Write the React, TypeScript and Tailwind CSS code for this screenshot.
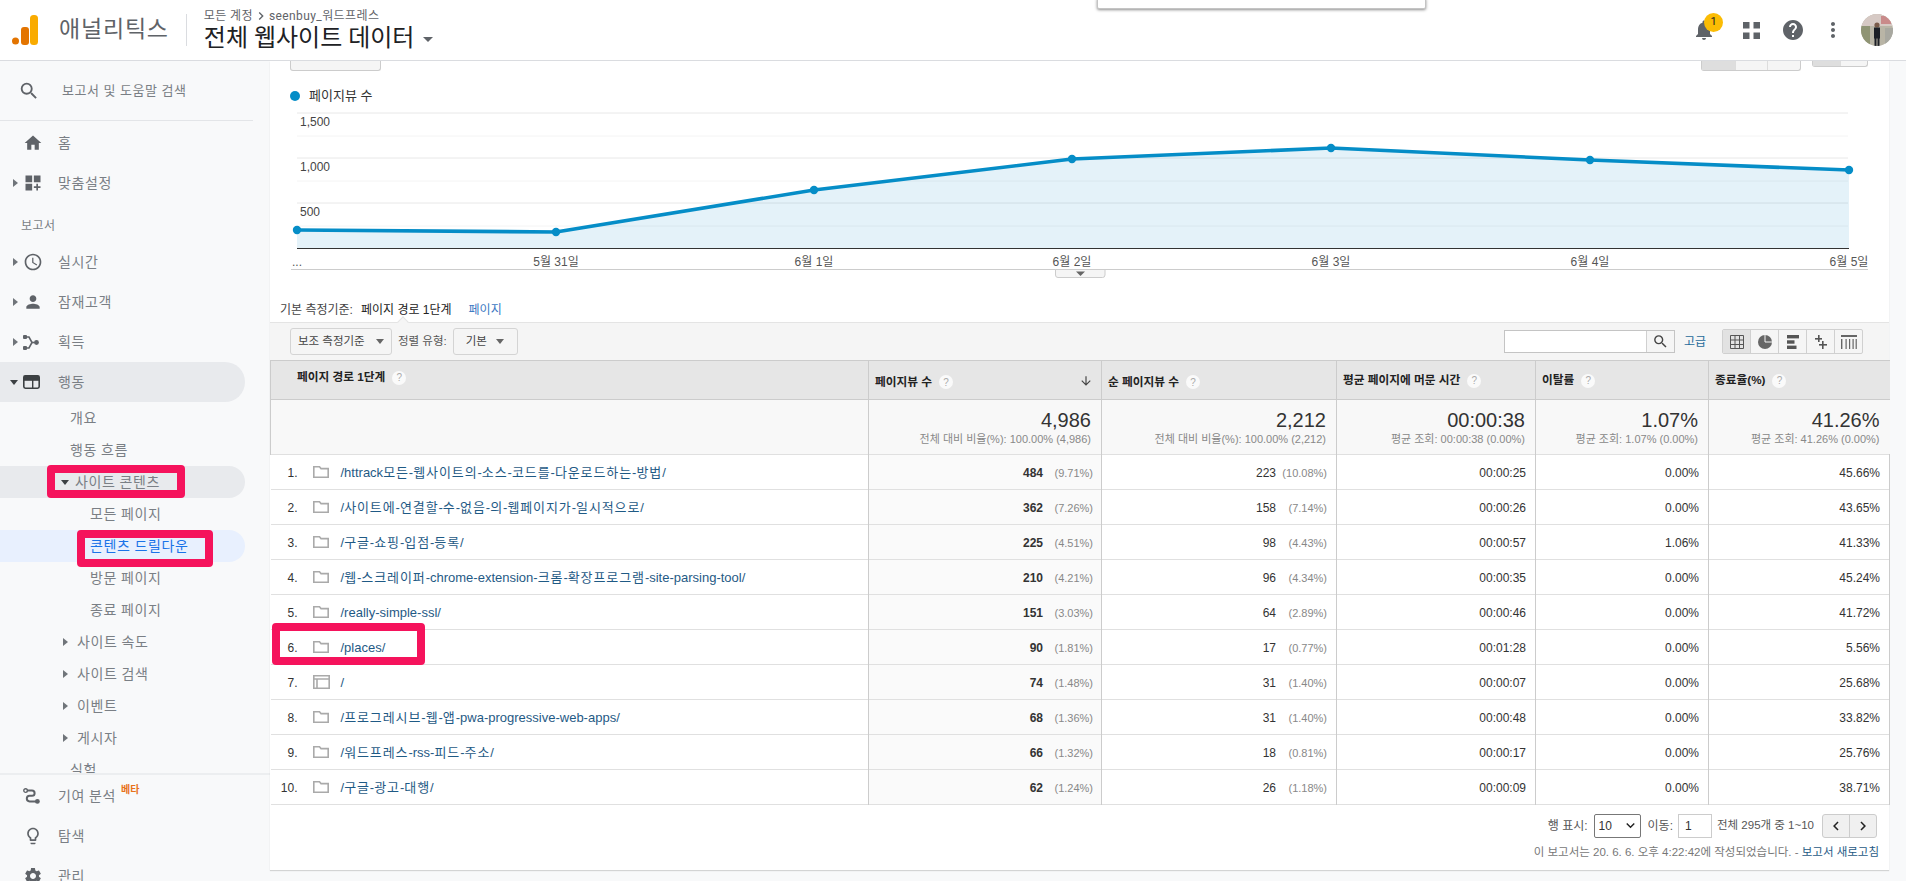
import type { ReactNode } from 'react';
import {
  MdAccessTime,
  MdArrowDownward,
  MdChevronLeft,
  MdChevronRight,
  MdDashboardCustomize,
  MdHelp,
  MdHome,
  MdKeyboardArrowDown,
  MdLightbulbOutline,
  MdMoreVert,
  MdNotifications,
  MdPerson,
  MdSearch,
  MdSettings,
} from 'react-icons/md';

interface Row {
  path: string;
  views: string;
  viewsPct: string;
  unique: string;
  uniquePct: string;
  time: string;
  bounce: string;
  exit: string;
  page?: boolean;
}

const rows: Row[] = [
  { path: '/httrack모든-웹사이트의-소스-코드를-다운로드하는-방법/', views: '484', viewsPct: '(9.71%)', unique: '223', uniquePct: '(10.08%)', time: '00:00:25', bounce: '0.00%', exit: '45.66%' },
  { path: '/사이트에-연결할-수-없음-의-웹페이지가-일시적으로/', views: '362', viewsPct: '(7.26%)', unique: '158', uniquePct: '(7.14%)', time: '00:00:26', bounce: '0.00%', exit: '43.65%' },
  { path: '/구글-쇼핑-입점-등록/', views: '225', viewsPct: '(4.51%)', unique: '98', uniquePct: '(4.43%)', time: '00:00:57', bounce: '1.06%', exit: '41.33%' },
  { path: '/웹-스크레이퍼-chrome-extension-크롬-확장프로그램-site-parsing-tool/', views: '210', viewsPct: '(4.21%)', unique: '96', uniquePct: '(4.34%)', time: '00:00:35', bounce: '0.00%', exit: '45.24%' },
  { path: '/really-simple-ssl/', views: '151', viewsPct: '(3.03%)', unique: '64', uniquePct: '(2.89%)', time: '00:00:46', bounce: '0.00%', exit: '41.72%' },
  { path: '/places/', views: '90', viewsPct: '(1.81%)', unique: '17', uniquePct: '(0.77%)', time: '00:01:28', bounce: '0.00%', exit: '5.56%' },
  { path: '/', views: '74', viewsPct: '(1.48%)', unique: '31', uniquePct: '(1.40%)', time: '00:00:07', bounce: '0.00%', exit: '25.68%', page: true },
  { path: '/프로그레시브-웹-앱-pwa-progressive-web-apps/', views: '68', viewsPct: '(1.36%)', unique: '31', uniquePct: '(1.40%)', time: '00:00:48', bounce: '0.00%', exit: '33.82%' },
  { path: '/워드프레스-rss-피드-주소/', views: '66', viewsPct: '(1.32%)', unique: '18', uniquePct: '(0.81%)', time: '00:00:17', bounce: '0.00%', exit: '25.76%' },
  { path: '/구글-광고-대행/', views: '62', viewsPct: '(1.24%)', unique: '26', uniquePct: '(1.18%)', time: '00:00:09', bounce: '0.00%', exit: '38.71%' },
];

// chart coordinates are relative to the svg, which starts at page (270, 105)
const points = [
  { x: 27, y: 125 },
  { x: 286, y: 127, label: '5월 31일' },
  { x: 544, y: 85, label: '6월 1일' },
  { x: 802, y: 54, label: '6월 2일' },
  { x: 1061, y: 43, label: '6월 3일' },
  { x: 1320, y: 55, label: '6월 4일' },
  { x: 1579, y: 65, label: '6월 5일' },
];

const linePath = points.map((p, i) => `${i === 0 ? 'M' : 'L'} ${p.x} ${p.y}`).join(' ');
const areaPath = `${linePath} L 1579 143 L 27 143 Z`;

// hangul runs a bit wider in the reference than Noto's, latin does not
function PathText({ text }: { text: string }) {
  const parts = text.split(/([가-힣]+)/);
  return (
    <>
      {parts.map((part, i) => (
        <span key={i} className={i % 2 === 1 ? 'tracking-[0.9px]' : ''}>
          {part}
        </span>
      ))}
    </>
  );
}

function Caret({ open }: { open?: boolean }) {
  return open ? (
    <span className="h-0 w-0 border-x-[4px] border-t-[5px] border-x-transparent border-t-[#3c4043]" />
  ) : (
    <span className="h-0 w-0 border-y-[4px] border-l-[5px] border-y-transparent border-l-[#70757a]" />
  );
}

function TopItem({ icon, label, caret, active }: { icon: ReactNode; label: string; caret?: 'open' | 'closed'; active?: boolean }) {
  return (
    <div className={`flex h-[40px] w-[245px] items-center rounded-r-[20px] ${active ? 'bg-[#e8eaed]' : ''}`}>
      <span className="flex w-[23px] justify-end pr-[5px]">
        {caret && <Caret open={caret === 'open'} />}
      </span>
      <span className="flex w-[35px] items-center text-[#5f6368]">{icon}</span>
      <span className="text-[14px] tracking-[0.6px] text-[#7a7f85]">{label}</span>
    </div>
  );
}

function SubItem({ label, indent, caret }: { label: string; indent: string; caret?: boolean }) {
  return (
    <div className={`flex h-[32px] items-center ${indent} text-[14px] tracking-[0.6px] text-[#7a7f85]`}>
      {caret && (
        <span className="mr-[9px] flex">
          <Caret />
        </span>
      )}
      {label}
    </div>
  );
}

function Sidebar() {
  return (
    <aside className="flex h-[820px] w-[270px] shrink-0 flex-col bg-[#f8f9fa]">
      <div className="min-h-0 flex-1 overflow-hidden">
        <div className="flex h-[60px] w-[253px] items-center border-b border-[#e3e5e8] pl-[18px]">
          <MdSearch className="mr-[22px] text-[22px] text-[#5f6368]" />
          <span className="text-[13px] tracking-[0.6px] text-[#7a7f85]">보고서 및 도움말 검색</span>
        </div>
        <div className="pt-[2px]">
          <TopItem icon={<MdHome className="text-[20px]" />} label="홈" />
          <TopItem icon={<MdDashboardCustomize className="text-[20px]" />} label="맞춤설정" caret="closed" />
          <div className="flex h-[39px] items-end pb-[7px] pl-[21px] text-[12px] tracking-[0.4px] text-[#7a7f85]">보고서</div>
          <TopItem icon={<MdAccessTime className="text-[20px]" />} label="실시간" caret="closed" />
          <TopItem icon={<MdPerson className="text-[20px]" />} label="잠재고객" caret="closed" />
          <TopItem
            icon={
              <svg width="16" height="15" viewBox="0 0 16 15" className="fill-current">
                <rect x="0" y="0" width="4" height="4" rx="1" />
                <rect x="0" y="11" width="4" height="4" rx="1" />
                <circle cx="13.5" cy="7.5" r="2.4" />
                <path d="M3 2 L6 2 L9 7.5 L6 13 L3 13" fill="none" stroke="currentColor" strokeWidth="1.6" />
                <path d="M9 7.5 L12 7.5" stroke="currentColor" strokeWidth="1.6" />
              </svg>
            }
            label="획득"
            caret="closed"
          />
          <TopItem
            icon={
              <svg width="17" height="14" viewBox="0 0 17 14">
                <rect x="0.8" y="0.8" width="15.4" height="12.4" rx="1.6" fill="none" stroke="#3c4043" strokeWidth="1.6" />
                <rect x="0.8" y="0.8" width="15.4" height="5" fill="#3c4043" />
                <rect x="9" y="5" width="1.4" height="8" fill="#3c4043" />
              </svg>
            }
            label="행동"
            caret="open"
            active
          />
          <SubItem label="개요" indent="pl-[70px]" />
          <SubItem label="행동 흐름" indent="pl-[70px]" />
          <div className="relative flex h-[32px] w-[245px] items-center rounded-r-[16px] bg-[#e8eaed] pl-[61px] text-[14px] tracking-[0.6px] text-[#7a7f85]">
            <span className="mr-[6px] flex">
              <Caret open />
            </span>
            사이트 콘텐츠
            <div className="pointer-events-none absolute top-[-1px] left-[47px] h-[33px] w-[138px] rounded-[4px] border-8 border-[#f5135c]" />
          </div>
          <SubItem label="모든 페이지" indent="pl-[90px]" />
          <div className="relative flex h-[32px] w-[245px] items-center rounded-r-[16px] bg-[#e8f0fe] pl-[90px] text-[14px] tracking-[0.6px] text-[#1a73e8]">
            콘텐츠 드릴다운
            <div className="pointer-events-none absolute top-0 left-[77px] h-[37px] w-[136px] rounded-[4px] border-8 border-[#f5135c]" />
          </div>
          <SubItem label="방문 페이지" indent="pl-[90px]" />
          <SubItem label="종료 페이지" indent="pl-[90px]" />
          <SubItem label="사이트 속도" indent="pl-[63px]" caret />
          <SubItem label="사이트 검색" indent="pl-[63px]" caret />
          <SubItem label="이벤트" indent="pl-[63px]" caret />
          <SubItem label="게시자" indent="pl-[63px]" caret />
          <SubItem label="실험" indent="pl-[70px]" />
        </div>
      </div>
      <div className="h-[108px] shrink-0 overflow-hidden border-t-2 border-[#eceef0] pt-[1px]">
        <TopItem
          icon={
            <svg width="17" height="16" viewBox="0 0 17 16" className="fill-current">
              <circle cx="2.6" cy="2.6" r="1.8" fill="none" stroke="currentColor" strokeWidth="1.4" />
              <circle cx="14.4" cy="13.4" r="2.4" />
              <path d="M4.5 2.6 H9 A2.6 2.6 0 0 1 9 7.8 H6.6 A2.8 2.8 0 0 0 6.6 13.4 H13" fill="none" stroke="currentColor" strokeWidth="2" />
            </svg>
          }
          label="기여 분석"
        />
        <div className="relative">
          <span className="absolute top-[-34px] left-[121px] text-[10px] font-bold text-[#e8711a]">베타</span>
        </div>
        <TopItem icon={<MdLightbulbOutline className="text-[20px]" />} label="탐색" />
        <TopItem icon={<MdSettings className="text-[20px]" />} label="관리" />
      </div>
    </aside>
  );
}

function Header() {
  return (
    <header className="relative flex h-[61px] shrink-0 items-center border-b border-[#dadce0] bg-white">
      <svg width="26" height="30" viewBox="0 0 26 30" className="mr-[21px] ml-[12px]">
        <circle cx="3.5" cy="26" r="3.5" fill="#e37400" />
        <rect x="9" y="12" width="8" height="18" rx="3" fill="#e37400" />
        <rect x="18" y="0" width="8" height="30" rx="3.5" fill="#f9ab00" />
      </svg>
      <span className="text-[23px] tracking-[0.8px] text-[#5f6368]">애널리틱스</span>
      <span className="mx-[17px] h-[32px] w-px bg-[#dadce0]" />
      <div className="flex flex-col">
        <span className="flex items-center text-[12px] leading-[16px] tracking-[0.4px] text-[#5f6368]">
          모든 계정
          <MdChevronRight className="text-[16px]" />
          seenbuy_워드프레스
        </span>
        <span className="flex items-center text-[24px] leading-[29px] text-[#202124]">
          전체 웹사이트 데이터
          <span className="mt-[2px] ml-[9px] h-0 w-0 border-x-[5px] border-t-[5px] border-x-transparent border-t-[#5f6368]" />
        </span>
      </div>
      {/* menu left open above the page */}
      <div className="absolute top-[-2px] left-[1097px] h-[11px] w-[329px] rounded-b-[2px] border border-[#c4c4c4] bg-white shadow-[0_1px_3px_rgba(0,0,0,0.45)]" />
      <div className="ml-auto flex items-center text-[#5f6368]">
        <span className="relative flex w-[24px] justify-center">
          <MdNotifications className="text-[24px]" />
          <span className="absolute top-[-5px] left-[12px] flex h-[19px] w-[19px] items-center justify-center rounded-full bg-[#fbbc04] text-[11px] text-[#202124]">1</span>
        </span>
        <svg width="17" height="17" viewBox="0 0 17 17" className="ml-[27px] fill-current">
          <rect x="0" y="0" width="6.5" height="6.5" />
          <rect x="10.5" y="0" width="6.5" height="6.5" />
          <rect x="0" y="10.5" width="6.5" height="6.5" />
          <rect x="10.5" y="10.5" width="6.5" height="6.5" />
        </svg>
        <MdHelp className="ml-[21px] text-[24px]" />
        <MdMoreVert className="ml-[16px] text-[24px]" />
        <svg width="32" height="32" viewBox="0 0 32 32" className="mr-[13px] ml-[16px]">
          <defs>
            <clipPath id="avatar-clip">
              <circle cx="16" cy="16" r="16" />
            </clipPath>
          </defs>
          <g clipPath="url(#avatar-clip)">
            <rect width="32" height="32" fill="#b9b5a6" />
            <rect width="32" height="12" fill="#d6c9c4" />
            <rect x="20" y="2" width="10" height="8" fill="#c98a8a" />
            <rect x="0" y="12" width="9" height="20" fill="#8f9474" />
            <rect x="24" y="14" width="8" height="18" fill="#a8a8a0" />
            <circle cx="16" cy="11" r="2.6" fill="#7a5b4a" />
            <rect x="13" y="13.5" width="6" height="11" fill="#1c1f26" />
            <rect x="13.5" y="24" width="2" height="8" fill="#1c1f26" />
            <rect x="16.5" y="24" width="2" height="8" fill="#1c1f26" />
          </g>
        </svg>
      </div>
    </header>
  );
}

function Chart() {
  const gridMajor = [8, 53, 98];
  const gridMinor = [31, 76, 121];
  return (
    <svg width="1619" height="175" viewBox="0 0 1619 175" className="block overflow-visible">
      {gridMajor.map((y) => (
        <line key={y} x1="27" x2="1578" y1={y} y2={y} stroke="#e8e8e8" />
      ))}
      {gridMinor.map((y) => (
        <line key={y} x1="27" x2="1578" y1={y} y2={y} stroke="#f4f4f4" />
      ))}
      <path d={areaPath} fill="#058dc7" fillOpacity="0.11" />
      <line x1="27" x2="1579" y1="143.5" y2="143.5" stroke="#333" />
      <line x1="21" x2="1598" y1="164.5" y2="164.5" stroke="#ccc" />
      {/* collapse tab hanging under the axis */}
      <path d="M785.5 164.5 V170 Q785.5 172.5 788 172.5 H832.5 Q835 172.5 835 170 V164.5 Z" fill="#f5f5f5" stroke="#ccc" />
      <path d="M806 166.5 H815 L810.5 171 Z" fill="#666" />
      <path d={linePath} fill="none" stroke="#058dc7" strokeWidth="3.6" strokeLinejoin="round" />
      {points.map((p) => (
        <circle key={p.x} cx={p.x} cy={p.y} r="4.2" fill="#058dc7" />
      ))}
      {[
        { y: 21, t: '1,500' },
        { y: 66, t: '1,000' },
        { y: 111, t: '500' },
      ].map((l) => (
        <text key={l.t} x="30" y={l.y} fontSize="12" fill="#444" fontFamily="'Liberation Sans', sans-serif">
          {l.t}
        </text>
      ))}
      <text x="22" y="161" fontSize="12" fill="#555" fontFamily="'Liberation Sans', sans-serif">...</text>
      {points.slice(1).map((p) => (
        <text key={p.x} x={p.x} y="161" textAnchor="middle" fontSize="12" fill="#555" fontFamily="'Liberation Sans', 'Noto Sans CJK KR', sans-serif">
          {p.label}
        </text>
      ))}
    </svg>
  );
}

function Help() {
  return (
    <span className="ml-[7px] inline-flex h-[14px] w-[14px] items-center justify-center rounded-full bg-white/80 text-[10px] font-normal text-[#aaa]">?</span>
  );
}

function Toolbar() {
  return (
    <div className="flex h-[38px] items-center border-t border-[#e4e4e4] bg-[#f5f5f5] pl-[20px] text-[11.5px] text-[#555]">
      <div className="flex h-[27px] w-[102px] items-center justify-between rounded-[3px] border border-[#d4d4d4] bg-[#f5f5f5] px-[7px] text-[#444]">
        보조 측정기준
        <span className="h-0 w-0 border-x-[4px] border-t-[5px] border-x-transparent border-t-[#666]" />
      </div>
      <span className="mx-[6px]">정렬 유형:</span>
      <div className="flex h-[27px] w-[65px] items-center justify-between rounded-[3px] border border-[#d4d4d4] bg-[#f5f5f5] pr-[13px] pl-[12px] text-[#444]">
        기본
        <span className="h-0 w-0 border-x-[4px] border-t-[5px] border-x-transparent border-t-[#666]" />
      </div>
      <div className="ml-auto flex h-[23px] w-[171px] border border-[#c4c4c4] bg-white">
        <span className="flex-1 border-r border-[#d0d0d0]" />
        <span className="flex w-[27px] items-center justify-center bg-[#f5f5f5]">
          <MdSearch className="text-[17px] text-[#444]" />
        </span>
      </div>
      <span className="ml-[9px] w-[24px] text-[12px] text-[#1f6a9a]">고급</span>
      <div className="mr-[26px] ml-[14px] flex h-[25px] w-[141px] overflow-hidden rounded-[2px] border border-[#d0d0d0]">
        <span className="flex flex-1 items-center justify-center border-r border-[#d0d0d0] bg-[#e2e2e2]">
          <svg width="14" height="14" viewBox="0 0 14 14" fill="none" stroke="#555">
            <path d="M0.5 0.5 H13.5 V13.5 H0.5 Z M0.5 5 H13.5 M0.5 9.5 H13.5 M5 0.5 V13.5 M9.5 0.5 V13.5" />
          </svg>
        </span>
        <span className="flex flex-1 items-center justify-center border-r border-[#d0d0d0]">
          <svg width="14" height="14" viewBox="0 0 14 14">
            <circle cx="7" cy="7" r="7" fill="#666" />
            <path d="M7 0 V7 H14" fill="none" stroke="#f5f5f5" />
          </svg>
        </span>
        <span className="flex flex-1 items-center justify-center border-r border-[#d0d0d0]">
          <svg width="12" height="14" viewBox="0 0 12 14" fill="#555">
            <rect y="0" width="12" height="3.4" />
            <rect y="5.3" width="7.5" height="3.4" />
            <rect y="10.6" width="9.5" height="3.4" />
          </svg>
        </span>
        <span className="flex flex-1 items-center justify-center border-r border-[#d0d0d0]">
          <svg width="12" height="14" viewBox="0 0 12 14" fill="#555">
            <rect x="3" y="0" width="1.6" height="7" />
            <rect x="0" y="3" width="7" height="1.6" />
            <rect x="7" y="6" width="1.6" height="8" />
            <rect x="4" y="9" width="8" height="1.6" />
          </svg>
        </span>
        <span className="flex flex-1 items-center justify-center">
          <svg width="16" height="14" viewBox="0 0 16 14" fill="#666">
            <rect width="16" height="2" />
            <rect y="4" x="0" width="1.4" height="10" />
            <rect y="4" x="4.5" width="1.2" height="10" />
            <rect y="4" x="8" width="1.2" height="10" />
            <rect y="4" x="11.5" width="1.2" height="10" />
            <rect y="4" x="14.6" width="1.2" height="10" />
          </svg>
        </span>
      </div>
    </div>
  );
}

function SummaryCell({ value, sub }: { value: string; sub: string }) {
  return (
    <td className="border-l border-[#ccc] bg-[#f8f8f8] pr-[10px] text-right align-top">
      <div className="pt-[8px] text-[20px] leading-[24px] text-[#333]">{value}</div>
      <div className="text-[11px] leading-[14px] text-[#888]">{sub}</div>
    </td>
  );
}

function DataTable() {
  const headCell = 'border-l border-[#ccc] pl-[6px] text-left text-[11.7px] font-bold text-[#222] align-middle';
  return (
    <table className="w-[1619px] table-fixed border-collapse">
      <colgroup>
        <col className="w-[598px]" />
        <col className="w-[233px]" />
        <col className="w-[235px]" />
        <col className="w-[199px]" />
        <col className="w-[173px]" />
        <col className="w-[181px]" />
      </colgroup>
      <thead>
        <tr className="h-[39px] border-y border-[#ccc] bg-[#e6e6e6]">
          <th className="border-l border-[#ccc] pb-[6px] pl-[26px] text-left align-middle text-[11.7px] font-bold text-[#222]">
            페이지 경로 1단계
            <Help />
          </th>
          <th className={`${headCell} pt-[3px]`}>
            <div className="flex items-center justify-between pr-[8px]">
              <span>
                페이지뷰 수
                <Help />
              </span>
              <MdArrowDownward className="text-[14px] text-[#444]" />
            </div>
          </th>
          <th className={`${headCell} pt-[3px]`}>
            순 페이지뷰 수
            <Help />
          </th>
          <th className={headCell}>
            평균 페이지에 머문 시간
            <Help />
          </th>
          <th className={headCell}>
            이탈률
            <Help />
          </th>
          <th className={headCell}>
            종료율(%)
            <Help />
          </th>
        </tr>
      </thead>
      <tbody>
        <tr className="h-[55px] border-b border-[#e0e0e0]">
          <td className="border-l border-[#ccc] bg-[#f8f8f8]" />
          <SummaryCell value="4,986" sub="전체 대비 비율(%): 100.00% (4,986)" />
          <SummaryCell value="2,212" sub="전체 대비 비율(%): 100.00% (2,212)" />
          <SummaryCell value="00:00:38" sub="평균 조회: 00:00:38 (0.00%)" />
          <SummaryCell value="1.07%" sub="평균 조회: 1.07% (0.00%)" />
          <SummaryCell value="41.26%" sub="평균 조회: 41.26% (0.00%)" />
        </tr>
        {rows.map((row, i) => (
          <tr key={row.path} className="h-[35px] border-b border-[#e0e0e0] text-[12px] text-[#333] [&>td]:pt-[2px]">
            <td className="relative bg-white">
              <div className="flex items-center">
                <span className="w-[27px] text-right">{i + 1}.</span>
                <span className="mt-[-3px] ml-[15px] flex w-[28px]">
                  {row.page ? (
                    <svg width="17" height="14" viewBox="0 0 17 14" fill="none" stroke="#aaa" strokeWidth="1.6">
                      <path d="M0.8 0.8 H16.2 V13.2 H0.8 Z M0.8 4 H16.2 M4 4 V13.2" />
                    </svg>
                  ) : (
                    <svg width="16" height="12" viewBox="0 0 16 12" fill="none" stroke="#aaa" strokeWidth="1.6">
                      <path d="M0.8 0.8 H6.5 L8 2.6 H15.2 V11.2 H0.8 Z" />
                    </svg>
                  )}
                </span>
                <span className="text-[13px] text-[#1f5a85]">
                  <PathText text={row.path} />
                </span>
              </div>
              {i === 5 && (
                <div className="pointer-events-none absolute top-[-7px] left-[1px] h-[42px] w-[153px] rounded-[4px] border-8 border-[#f5135c]" />
              )}
            </td>
            <td className="border-l border-[#ccc] bg-[#fafafa]">
              <div className="flex items-baseline justify-end pr-[8px]">
                <span className="font-bold">{row.views}</span>
                <span className="w-[50px] text-right text-[11px] text-[#888]">{row.viewsPct}</span>
              </div>
            </td>
            <td className="border-l border-[#ccc]">
              <div className="flex items-baseline justify-end pr-[9px]">
                <span>{row.unique}</span>
                <span className="w-[51px] text-right text-[11px] text-[#888]">{row.uniquePct}</span>
              </div>
            </td>
            <td className="border-l border-[#ccc] pr-[9px] text-right">{row.time}</td>
            <td className="border-l border-[#ccc] pr-[9px] text-right">{row.bounce}</td>
            <td className="border-x border-[#ccc] pr-[9px] text-right">{row.exit}</td>
          </tr>
        ))}
      </tbody>
    </table>
  );
}

function Pagination() {
  return (
    <div className="flex flex-col items-end text-[12px] text-[#555]">
      <div className="flex h-[24px] items-center pt-[1px] pr-[12px]">
        행 표시:
        <span className="ml-[6px] flex h-[24px] w-[47px] items-center justify-between rounded-[2px] border border-[#777] bg-white pr-[1px] pl-[4px] text-[#333]">
          10
          <MdKeyboardArrowDown className="text-[17px] text-[#222]" />
        </span>
        <span className="ml-[7px]">이동:</span>
        <span className="ml-[5px] flex h-[24px] w-[34px] items-center border border-[#ccc] bg-white pl-[6px] text-[#333]">1</span>
        <span className="ml-[5px] text-[11.5px]">전체 295개 중 1~10</span>
        <span className="ml-[8px] flex h-[24px] w-[55px] rounded-[3px] border border-[#ccc] bg-[#f0f0f0]">
          <span className="flex flex-1 items-center justify-center border-r border-[#ccc]">
            <MdChevronLeft className="text-[18px] text-[#222]" />
          </span>
          <span className="flex flex-1 items-center justify-center">
            <MdChevronRight className="text-[18px] text-[#222]" />
          </span>
        </span>
      </div>
      <div className="mt-[7px] pr-[10px] text-[11.5px] leading-[16px] text-[#777]">
        이 보고서는 20. 6. 6. 오후 4:22:42에 작성되었습니다. - <span className="text-[#1f5a85]">보고서 새로고침</span>
      </div>
    </div>
  );
}

export default function App() {
  return (
    <div className="flex h-screen flex-col overflow-hidden bg-[#f8f9fa] font-['Roboto','Noto_Sans_CJK_KR',sans-serif]">
      <Header />
      <div className="flex min-h-0 flex-1">
        <Sidebar />
        <main className="h-[809px] w-[1619px] shrink-0 bg-white font-['Liberation_Sans','Noto_Sans_CJK_KR',sans-serif] shadow-[0_1px_1px_rgba(0,0,0,0.15)]">
          <div className="flex h-[10px] items-start pl-[20px]">
            <div className="h-[10px] w-[91px] rounded-b-[3px] border border-t-0 border-[#ccc] bg-[#f5f5f5]" />
            <div className="ml-auto flex h-[10px] w-[100px] rounded-b-[3px] border border-t-0 border-[#ccc] bg-[#f5f5f5]">
              <span className="w-[33px] bg-[#dedede]" />
              <span className="w-[33px] border-x border-[#ddd]" />
            </div>
            <div className="mr-[21px] ml-[11px] flex h-[6px] w-[56px] rounded-b-[3px] border border-t-0 border-[#ccc] bg-[#f5f5f5]">
              <span className="w-[28px] border-r border-[#ddd] bg-[#dedede]" />
            </div>
          </div>
          <div className="flex h-[34px] items-center pt-[16px] pl-[20px] text-[13px] text-[#333]">
            <span className="mr-[9px] h-[10px] w-[10px] rounded-full bg-[#058dc7]" />
            페이지뷰 수
          </div>
          <Chart />
          <div className="relative flex h-[42px] items-end pb-[3px] pl-[10px] text-[12px] text-[#444]">
            기본 측정기준:
            <span className="ml-[8px] text-[#222]">페이지 경로 1단계</span>
            <span className="ml-[17px] text-[#3b78c2]">페이지</span>
            <span className="absolute bottom-[-4px] left-[129px] h-[8px] w-[8px] rotate-45 border-t border-l border-[#e4e4e4] bg-[#f5f5f5]" />
          </div>
          <Toolbar />
          <DataTable />
          <div className="pt-[8px]">
            <Pagination />
          </div>
        </main>
      </div>
    </div>
  );
}
